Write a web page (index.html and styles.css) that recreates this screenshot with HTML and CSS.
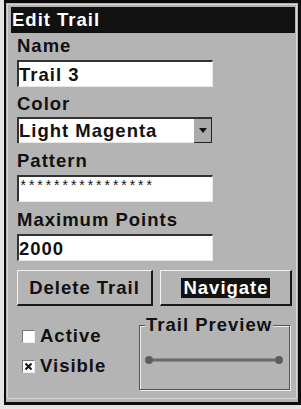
FILE: index.html
```html
<!DOCTYPE html>
<html>
<head>
<meta charset="utf-8">
<link rel="stylesheet" href="styles.css">
</head>
<body>
<div class="frame">
  <div class="panel">
    <div class="titlebar">Edit Trail</div>
    <div class="form">
      <div class="field field-first">
        <div class="label">Name</div>
        <div class="input">Trail 3</div>
      </div>
      <div class="field field-color">
        <div class="label">Color</div>
        <div class="select">
          <span class="select-value">Light Magenta</span>
          <span class="select-btn"><svg width="8" height="5" viewBox="0 0 8 5"><path d="M0 0H8L4 5Z" fill="#111"/></svg></span>
        </div>
      </div>
      <div class="field">
        <div class="label">Pattern</div>
        <div class="input pattern">****************</div>
      </div>
      <div class="field">
        <div class="label">Maximum Points</div>
        <div class="input">2000</div>
      </div>
      <div class="buttons">
        <div class="btn btn-delete">Delete Trail</div>
        <div class="btn btn-nav"><span class="hl">Navigate</span></div>
      </div>
      <div class="bottom">
        <div class="checks">
          <div class="check"><span class="box"></span>Active</div>
          <div class="check"><span class="box"><svg width="11" height="11" viewBox="0 0 11 11"><path d="M2.5 2.5L8.5 8.5M8.5 2.5L2.5 8.5" stroke="#111" stroke-width="2"/></svg></span>Visible</div>
        </div>
        <div class="preview">
          <span class="legend">Trail Preview</span>
          <svg class="preview-art" width="149" height="63" viewBox="0 0 149 63">
            <line x1="9" y1="34" x2="139" y2="34" stroke="#6a6a6a" stroke-width="3"/>
            <circle cx="9" cy="34" r="4" fill="#5e5e5e"/>
            <circle cx="139" cy="34" r="4" fill="#5e5e5e"/>
          </svg>
        </div>
      </div>
    </div>
  </div>
</div>
</body>
</html>
```
FILE: styles.css
```css
body {
  margin: 0;
  background: #e4e4e4;
  font-family: "Liberation Sans", Arial, sans-serif;
  font-weight: bold;
  font-size: 18.5px;
  letter-spacing: 1px;
  color: #111;
}

.frame {
  margin-left: 4px;
  width: 297px;
  height: 405px;
  box-sizing: border-box;
  border: solid #0c0c0c;
  border-width: 3px 3px 3px 2px;
  padding: 1px 1px 3px 1px;
  background: #b4b4b4;
}

.panel {
  height: 100%;
  box-sizing: border-box;
  border: 1px solid #d6d6d6;
  padding-top: 2px;
}

.titlebar {
  margin: 0 1px 0 3px;
  height: 26px;
  line-height: 26px;
  background: #111;
  color: #fff;
  padding-left: 1px;
}

.form {
  padding: 0 3px 0 9px;
}

.field {
  margin-top: 7px;
}

.field-first {
  margin-top: 2px;
}

.field-color {
  margin-top: 6px;
}

.label {
  line-height: 22px;
}

.input {
  margin-top: 3px;
  width: 196px;
  height: 27px;
  box-sizing: border-box;
  background: #fff;
  border-style: solid;
  border-width: 2px 1px 1px 2px;
  border-color: #333 #e8e8e8 #e8e8e8 #333;
  line-height: 22px;
  padding-top: 2px;
}

.pattern {
  font-family: "Liberation Mono", monospace;
  font-weight: normal;
  font-size: 14px;
  line-height: 14px;
  letter-spacing: 0;
  padding-top: 3px;
}

.select {
  display: flex;
  margin-top: 2px;
  width: 195px;
  height: 26px;
  box-sizing: border-box;
  border-top: 2px solid #333;
  border-left: 2px solid #333;
  background: #fff;
}

.select-value {
  flex: 1;
  line-height: 22px;
  padding-top: 1px;
  border-bottom: 1px solid #e8e8e8;
}

.select-btn {
  width: 18px;
  box-sizing: border-box;
  background: #ababab;
  border-right: 1px solid #222;
  border-bottom: 1px solid #222;
  display: flex;
  align-items: center;
  justify-content: center;
}

.select-btn svg {
  display: block;
}

.buttons {
  display: flex;
  gap: 7px;
  margin-top: 9px;
}

.btn {
  height: 36px;
  box-sizing: border-box;
  border-style: solid;
  border-width: 1px 2px 2px 1px;
  border-color: #f2f2f2 #1a1a1a #1a1a1a #f2f2f2;
  display: flex;
  align-items: center;
  justify-content: center;
  line-height: 20px;
}

.btn-delete {
  width: 136px;
}

.btn-nav {
  width: 132px;
}

.hl {
  background: #111;
  color: #fff;
  padding: 0 1px 0 2px;
}

.bottom {
  display: flex;
  margin-top: 8px;
}

.checks {
  width: 117px;
  padding: 11px 0 0 5px;
  display: flex;
  flex-direction: column;
  gap: 8px;
}

.check {
  display: flex;
  align-items: center;
  gap: 5px;
  line-height: 22px;
}

.box {
  width: 13px;
  height: 13px;
  box-sizing: border-box;
  background: #fff;
  border: 1px solid;
  border-color: #777 #eee #eee #777;
  display: flex;
}

.box svg {
  display: block;
}

.preview {
  position: relative;
  margin-top: 11px;
  width: 151px;
  height: 65px;
  box-sizing: border-box;
  border: 1px solid #555;
  box-shadow: inset 1px 1px 0 #eee, 1px 1px 0 #eee;
}

.legend {
  position: absolute;
  left: 5px;
  top: -12px;
  line-height: 22px;
  background: #b4b4b4;
  padding: 0 1px;
  white-space: nowrap;
}

.preview-art {
  display: block;
}
```
